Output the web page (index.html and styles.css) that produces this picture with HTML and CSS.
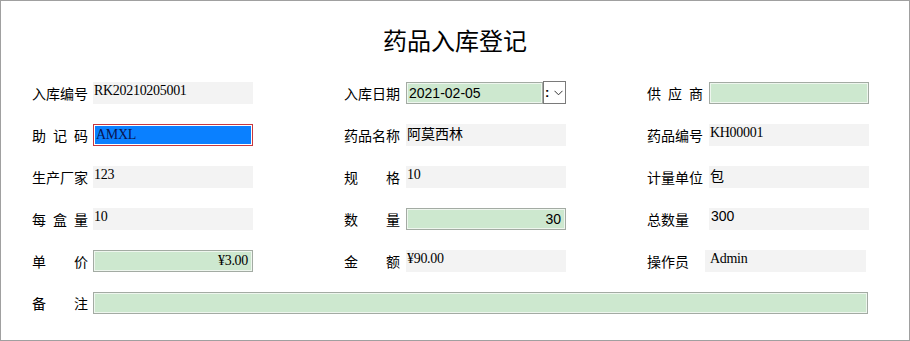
FILE: index.html
```html
<!DOCTYPE html>
<html lang="zh-CN">
<head>
<meta charset="utf-8">
<title>药品入库登记</title>
<link rel="stylesheet" href="styles.css">
</head>
<body>
<div class="form">
  <h1 class="title">药品入库登记</h1>
  <div class="grid">
    <div class="cell"><span class="label">入库编号</span><span class="field ro mono">RK20210205001</span></div>
    <div class="cell"><span class="label">入库日期</span>
      <span class="date">
        <span class="field edit sans date-text">2021-02-05</span>
        <span class="dd"><span class="colon">:</span><svg class="chev" width="9" height="6" viewBox="0 0 9 6"><path d="M0.5 0.8 L4.5 4.8 L8.5 0.8" fill="none" stroke="#333" stroke-width="1"/></svg></span>
      </span>
    </div>
    <div class="cell"><span class="label j">供 应 商</span><span class="field edit"></span></div>

    <div class="cell"><span class="label j">助 记 码</span><span class="field focus mono"><span class="sel">AMXL</span></span></div>
    <div class="cell"><span class="label">药品名称</span><span class="field ro cjk">阿莫西林</span></div>
    <div class="cell"><span class="label">药品编号</span><span class="field ro mono">KH00001</span></div>

    <div class="cell"><span class="label">生产厂家</span><span class="field ro mono">123</span></div>
    <div class="cell"><span class="label j">规 格</span><span class="field ro mono">10</span></div>
    <div class="cell"><span class="label">计量单位</span><span class="field ro cjk">包</span></div>

    <div class="cell"><span class="label j">每 盒 量</span><span class="field ro mono">10</span></div>
    <div class="cell"><span class="label j">数 量</span><span class="field edit sans right">30</span></div>
    <div class="cell"><span class="label">总数量</span><span class="field ro sans pad3">300</span></div>

    <div class="cell"><span class="label j">单 价</span><span class="field edit mono right">¥3.00</span></div>
    <div class="cell"><span class="label j">金 额</span><span class="field ro mono">¥90.00</span></div>
    <div class="cell"><span class="label">操作员</span><span class="field ro mono shift">Admin</span></div>
  </div>
  <div class="remark"><span class="label j">备 注</span><span class="field edit wide"></span></div>
</div>
</body>
</html>
```

FILE: styles.css
```css
html, body {
  margin: 0;
  padding: 0;
  background: #fff;
}

.form {
  width: 910px;
  height: 341px;
  box-sizing: border-box;
  border: 1px solid #a0a0a0;
  padding-top: 23px;
  background: #fff;
  color: #000;
}

.title {
  margin: 0;
  text-align: center;
  font-family: "Noto Sans CJK SC", sans-serif;
  font-weight: normal;
  font-size: 24px;
  line-height: 32px;
}

.grid {
  display: grid;
  grid-template-columns: 312px 303px 1fr;
  row-gap: 20px;
  margin-top: 26px;
  padding-left: 31px;
}

.cell {
  display: flex;
  align-items: center;
  height: 22px;
}

.label {
  width: 56px;
  flex: none;
  font-family: "Noto Sans CJK SC", sans-serif;
  font-size: 14px;
  line-height: 16px;
  white-space: pre;
}

.label.j {
  text-align: justify;
  text-align-last: justify;
}

.field {
  display: block;
  width: 160px;
  height: 22px;
  box-sizing: border-box;
  margin-left: 5px;
  flex: none;
  overflow: hidden;
  white-space: nowrap;
}

.cell:nth-child(3n+2) .field,
.cell:nth-child(3n) .field {
  margin-left: 6px;
}

.ro {
  background: #f3f3f3;
  padding: 0 1px;
}

.edit {
  background: #cde8cf;
  border: 1px solid #a3aba3;
  box-shadow: inset 0 0 0 1px #eef6ee;
  padding: 2px 2px 0;
}

.mono {
  font-family: "Liberation Serif", serif;
  font-size: 14px;
  line-height: 18px;
  letter-spacing: -0.3px;
}

.sans {
  font-family: "Liberation Sans", sans-serif;
  font-size: 14px;
  line-height: 17px;
}

.cjk {
  font-family: "Noto Sans CJK SC", sans-serif;
  font-size: 14px;
  line-height: 17px;
  padding-top: 1px;
}

.right {
  text-align: right;
  padding-right: 4px;
}

.edit.mono {
  padding-top: 1px;
}

.pad3 {
  padding-left: 2px;
}

.cell .field.shift {
  margin-left: 2px;
  width: 161px;
  padding-left: 5px;
}

.focus {
  border: 1px solid #c8383f;
  box-shadow: inset 0 0 0 1px #fff;
  background: #0a80ff;
  padding: 1px 2px 0;
}

.sel {
  color: #0a1450;
}

.date {
  display: flex;
  width: 160px;
  margin-left: 6px;
  flex: none;
}

.cell .date .date-text {
  width: 137px;
  margin-left: 0;
  padding-top: 2px;
}

.dd {
  display: flex;
  align-items: center;
  width: 23px;
  height: 23px;
  box-sizing: border-box;
  border: 1px solid #7a7a7a;
  background: #fff;
  margin-top: -1px;
}

.colon {
  font-family: "Liberation Sans", sans-serif;
  font-size: 13px;
  line-height: 13px;
  width: 5px;
  padding-left: 1px;
  font-weight: bold;
}

.chev {
  margin-left: 4px;
  margin-top: 1px;
}

.remark {
  display: flex;
  align-items: center;
  margin-top: 20px;
  padding-left: 31px;
}

.remark .field.wide {
  width: 775px;
  margin-left: 5px;
}
```
